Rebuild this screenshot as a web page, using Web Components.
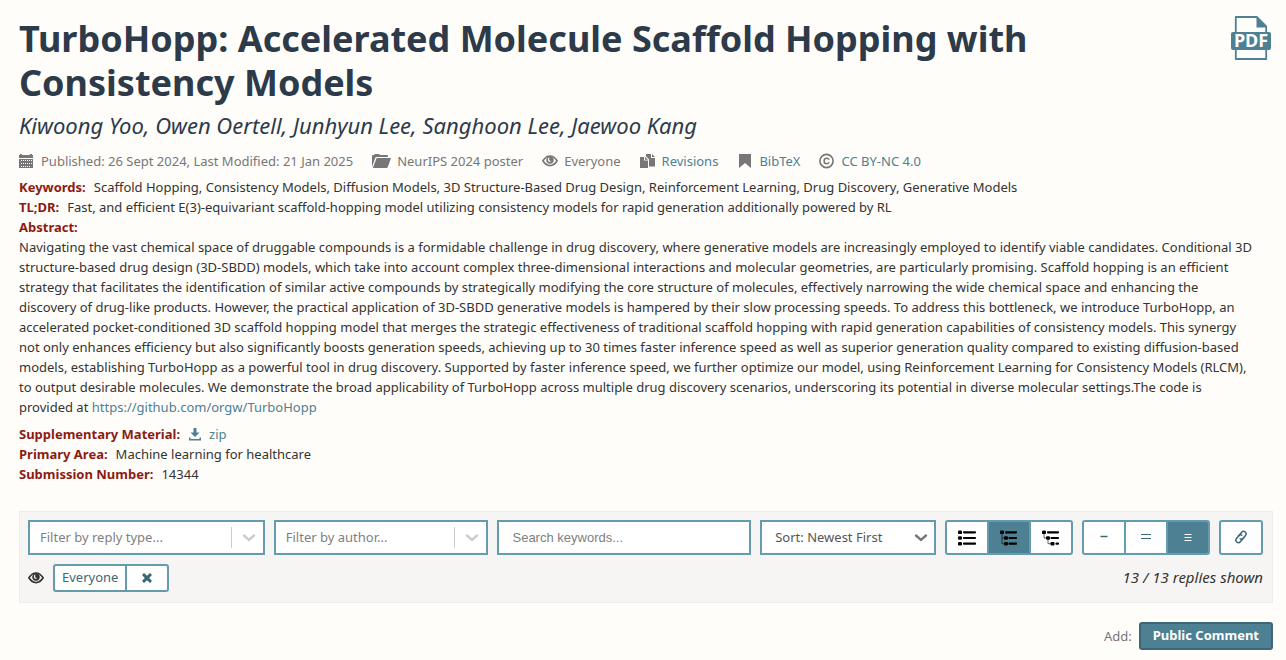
<!DOCTYPE html>
<html lang="en">
<head>
<meta charset="utf-8">
<meta name="viewport" content="width=device-width, initial-scale=1">
<title>TurboHopp: Accelerated Molecule Scaffold Hopping with Consistency Models</title>
<style>
  body {
    margin: 0;
    background: #fffdfa;
    color: #333;
    font: 13px/20px "Noto Sans", sans-serif;
    --teal: #4d8093;
    --teal-dark: #3e6775;
    --edge: #649bad;
    --muted: #777;
    --label: #8c1b13;
  }
</style>
</head>
<body>
<forum-page></forum-page>

<script>
const define = (name, html, setup) => {
  customElements.define(name, class extends HTMLElement {
    constructor() {
      super();
      const template = document.createElement('template');
      template.innerHTML = html;
      this.attachShadow({ mode: 'open' }).append(template.content.cloneNode(true));
    }
    connectedCallback() { if (setup) setup(this, this.shadowRoot); }
  });
};

const icons = {
  calendar: [16, 16, '<path fill-rule="evenodd" d="M0 2h1V1h2v1h8V1h2v1h1v3H0zM0 6h14v9H0zM2 7v1h1V7zm2 0v1h1V7zm2 0v1h1V7zm2 0v1h1V7zm2 0v1h1V7zm2 0v1h1V7zM2 10v1h1v-1zm2 0v1h1v-1zm2 0v1h1v-1zm2 0v1h1v-1zm2 0v1h1v-1zm2 0v1h1v-1zM2 13v1h1v-1zm2 0v1h1v-1zm2 0v1h1v-1zm2 0v1h1v-1zm2 0v1h1v-1z"/>'],
  folder: [19, 16, '<path d="M0 14V3q0-1 1-1h1l1-1h4l1 1h7q1 0 1 1v1H4.500Q3.600 4 3.200 5z"/><path d="M4.700 5H19L15.800 14q-.3 1-1.400 1H.8z"/>'],
  eye: [16, 16, '<path d="M.9 7.800Q4 3 8 3T15.100 7.800Q12 12.600 8 12.600T.9 7.800z" fill="none" stroke="currentColor" stroke-width="1.700"/><path fill-rule="evenodd" d="M8 3.200a3.800 3.800 0 1 0 .01 0zM6.100 5Q5.400 7.200 6.600 8.400 8 9.400 9.400 8.100 7.600 8.100 7.200 7 6.900 5.700 7.500 4.700z"/>'],
  duplicate: [16, 16, '<path d="M0 4h4v3.500h4V15H0z"/><path d="M5 3.800 8 6.700H5z"/><path d="M6 1h5v4h4v8.500H9V6.300L6 3.200z"/><path d="M12 1l3 3h-3z"/>'],
  bookmark: [16, 16, '<path d="M2 1h12v14l-6-5-6 5z"/>'],
  copyright: [16, 16, '<circle cx="7.500" cy="8" r="6.600" fill="none" stroke="currentColor" stroke-width="1.600"/><path d="M10.100 6.700Q9.400 5.200 7.700 5.200 5.100 5.200 5.100 8T7.700 10.800q1.700 0 2.400-1.500" fill="none" stroke="currentColor" stroke-width="1.500"/>'],
  download: [14, 14, '<path d="M5.500 1h3v4.500h3L7 10 2.500 5.500h3zM1 10.500h1.500V12h9v-1.500H13V13.500H1z"/>'],
  cross: [12, 12, '<path d="M1 3 3 1l3 2.800L9 1l2 2-2.800 3L11 9l-2 2-3-2.800L3 11 1 9l2.800-3z"/>'],
  list: [20, 18, '<rect x="1" y="1.500" width="4" height="3.600" rx="1.200"/><rect x="1" y="7.200" width="4" height="3.600" rx="1.200"/><rect x="1" y="12.900" width="4" height="3.600" rx="1.200"/><path d="M7 3.300h11M7 9h11M7 14.700h11" stroke="currentColor" stroke-width="2.200" stroke-linecap="round"/>'],
  nested: [20, 18, '<rect x="1" y="1.500" width="4" height="3.600" rx="1.200"/><rect x="5" y="7.200" width="4" height="3.600" rx="1.200"/><rect x="5" y="12.900" width="4" height="3.600" rx="1.200"/><path d="M7 3.300h10M10.500 9H17M10.500 14.700H17" stroke="currentColor" stroke-width="2.200" stroke-linecap="round"/><path d="M3 4v10.700h3M3 9h3" fill="none" stroke="currentColor" stroke-width=".6"/>'],
  tree: [20, 18, '<rect x="1" y="1.500" width="4" height="3.600" rx="1.200"/><rect x="5" y="7.200" width="4" height="3.600" rx="1.200"/><rect x="9.500" y="12.900" width="4" height="3.600" rx="1.200"/><path d="M7 3.300h10M10.500 9H17M15.500 14.700H17" stroke="currentColor" stroke-width="2.200" stroke-linecap="round"/><path d="M3 4v5h3M7 10v4.700h4" fill="none" stroke="currentColor" stroke-width=".6"/>'],
  minus: [12, 14, '<path d="M2.500 5.500h7" stroke="currentColor" stroke-width="1.400"/>'],
  equals: [12, 14, '<path d="M1 3.500h10M1 7.500h10" stroke="currentColor" stroke-width="1.200"/>'],
  bars: [12, 14, '<path d="M2.500 3.500h7M2.500 6.500h7M2.500 9.500h7" stroke="currentColor" stroke-width="1.200"/>'],
  link: [14, 16, '<g fill="none" stroke="currentColor" stroke-width="1.500" transform="rotate(-50 7 7)"><path d="M8.500 9.500H3A2.500 2.500 0 0 1 3 4.500H6.500A2.500 2.500 0 0 1 9 7"/><path d="M5.500 4.500H11A2.500 2.500 0 0 1 11 9.500H7.500A2.500 2.500 0 0 1 5 7"/></g>'],
  chevron: [14, 10, '<path d="M2 2.500l5 4.500 5-4.500" fill="none" stroke="currentColor" stroke-width="2.400" stroke-linecap="round"/>']
};

define('ui-icon', `
  <style>:host{display:inline-flex;flex:none} svg{display:block;fill:currentColor}</style>
  <svg aria-hidden="true"></svg>`, (host, root) => {
  const [w, h, body] = icons[host.getAttribute('name')];
  const svg = root.querySelector('svg');
  svg.setAttribute('viewBox', `0 0 ${w} ${h}`);
  svg.setAttribute('width', w);
  svg.setAttribute('height', h);
  svg.innerHTML = body;
});

define('pdf-link', `
  <style>
    :host{display:block;flex:none}
    a{display:block}
    svg{display:block}
    text{font:bold 18px "Noto Sans",sans-serif;fill:#fff}
  </style>
  <a href="#pdf" title="Download PDF"><svg width="40" height="46" viewBox="0 0 40 46">
    <path d="M4.800 1h21L35.200 10.500V43H4.800z" fill="#fffdfa" stroke="#4d8093" stroke-width="1.800" stroke-linejoin="round"/>
    <path d="M25.500 1v10.500h9.700z" fill="#4d8093"/>
    <rect y="16" width="40" height="18" rx="2" fill="#4d8093"/>
    <text x="20" y="31" text-anchor="middle">PDF</text>
  </svg></a>`);

define('note-header', `
  <style>
    :host{display:block;color:#2c3a4a}
    .top{display:flex;align-items:flex-start;justify-content:space-between;gap:24px;padding-right:2px}
    h1{margin:1px 0 0;max-width:1100px;font:bold 36px/44px "Noto Sans",sans-serif}
    .authors{font:italic 22px/32px "Noto Sans",sans-serif;margin-top:4px}
  </style>
  <div class="top"><h1><slot name="title"></slot></h1><pdf-link></pdf-link></div>
  <div class="authors"><slot name="authors"></slot></div>`);

define('meta-item', `
  <style>
    :host{display:flex;align-items:center;gap:6px;color:var(--muted)}
    ::slotted(a){color:var(--teal);text-decoration:none}
  </style>
  <span><slot></slot></span>`, (host, root) => {
  const icon = document.createElement('ui-icon');
  icon.setAttribute('name', host.getAttribute('icon'));
  root.querySelector('span').before(icon);
});

define('note-field', `
  <style>
    :host{display:block}
    strong{color:var(--label);margin-right:8px}
    :host([block]) strong{display:block}
    :host([block]) div{padding-right:18px}
    :host(:not([block])) div{display:inline}
  </style>
  <strong></strong><div><slot></slot></div>`, (host, root) => {
  root.querySelector('strong').textContent = host.getAttribute('label') + ':';
});

define('filter-select', `
  <style>
    :host{display:block;position:relative;min-width:0}
    select{appearance:none;box-sizing:border-box;width:100%;height:35px;margin:0;padding:0 40px 1px 10px;border:2px solid var(--edge);border-radius:0;background:#fff;color:#808080;font:inherit}
    .arrow{position:absolute;inset:7px 9px 7px auto;display:flex;align-items:center;padding-left:10px;border-left:1px solid #ccc;color:#ccc;pointer-events:none}
    :host([plain]) select{color:#555;padding-left:13px;padding-right:24px}
    :host([plain]) .arrow{color:#777;border:0;right:8px}
  </style>
  <select><option></option></select>
  <span class="arrow"><ui-icon name="chevron"></ui-icon></span>`, (host, root) => {
  const select = root.querySelector('select');
  select.setAttribute('aria-label', host.getAttribute('label'));
  root.querySelector('option').textContent = host.getAttribute('value');
});

define('keyword-search', `
  <style>
    :host{display:block;min-width:0}
    input{box-sizing:border-box;width:100%;height:35px;padding:0 13px;border:2px solid var(--edge);border-radius:0;background:#fff;font:13px "Liberation Sans",sans-serif}
    input::placeholder{color:#808080;opacity:1}
  </style>
  <input type="text" placeholder="Search keywords..." aria-label="Search keywords">`);

define('button-group', `
  <style>
    :host{display:flex;flex:none;box-sizing:border-box;height:35px;border:2px solid var(--edge);border-radius:3px;background:#fff;overflow:hidden;color:var(--teal-dark)}
    button{display:flex;align-items:center;justify-content:center;width:40px;padding:0;border:0;background:transparent;color:inherit}
    button + button{border-left:2px solid var(--edge);width:42px}
    button[aria-pressed=true]{background:var(--teal)}
    :host([tone=black]){color:#000}
    :host([tone=teal]) button[aria-pressed=true]{color:#fff}
  </style>`, (host, root) => {
  for (const entry of host.getAttribute('items').split(',')) {
    const [icon, label] = entry.split(':');
    const button = document.createElement('button');
    button.type = 'button';
    button.setAttribute('aria-label', label);
    button.setAttribute('aria-pressed', icon === host.getAttribute('selected'));
    button.innerHTML = `<ui-icon name="${icon}"></ui-icon>`;
    root.append(button);
  }
});

define('reader-tag', `
  <style>
    :host{display:flex;box-sizing:border-box;height:28px;border:2px solid var(--edge);border-radius:3px;background:#fff;overflow:hidden;color:var(--teal-dark)}
    button{display:flex;align-items:center;justify-content:center;padding:0 7px 2px;border:0;background:transparent;color:inherit;font:inherit}
    button + button{border-left:2px solid var(--edge);width:42px;padding:0}
  </style>
  <button type="button"><slot></slot></button>
  <button type="button" aria-label="Exclude"><ui-icon name="cross"></ui-icon></button>`);

define('filter-bar', `
  <style>
    :host{display:block;padding:8px 9px 10px 8px;border:1px solid #ececec;background:#f7f5f4}
    .row{display:flex;align-items:center;gap:9px}
    .row + .row{margin-top:9px}
    .w1{flex:237 1 0} .w2{flex:215 1 0} .w3{flex:254 1 0} .w4{flex:176 1 0}
    em{margin-left:auto;padding-bottom:2px;font-size:15px}
  </style>
  <div class="row">
    <filter-select class="w1" label="Reply type" value="Filter by reply type..."></filter-select>
    <filter-select class="w2" label="Author" value="Filter by author..."></filter-select>
    <keyword-search class="w3"></keyword-search>
    <filter-select class="w4" plain label="Sort" value="Sort: Newest First"></filter-select>
    <button-group tone="black" selected="nested" items="list:Linear,nested:Threaded,tree:Nested"></button-group>
    <button-group tone="teal" selected="bars" items="minus:Collapse,equals:Partial,bars:Expand"></button-group>
    <button-group items="link:Copy link"></button-group>
  </div>
  <div class="row">
    <ui-icon name="eye"></ui-icon>
    <reader-tag>Everyone</reader-tag>
    <em>13 / 13 replies shown</em>
  </div>`);

define('comment-action', `
  <style>
    :host{display:flex;justify-content:flex-end;align-items:center;gap:7px;color:var(--muted)}
    button{box-sizing:border-box;height:28px;padding:0 12px 2px;border:2px solid var(--teal-dark);border-radius:3px;background:var(--teal);color:#fff;font:inherit;font-weight:bold}
  </style>
  <span>Add:</span><button type="button">Public Comment</button>`);

define('forum-page', `
  <style>
    :host{display:block;padding:16px 13px 10px 19px}
    a{color:var(--teal);text-decoration:none}
    .meta{display:flex;flex-wrap:wrap;gap:0 19px;margin:10px 0 6px}
    .more{margin:7px 0 27px}
    .zip ui-icon{vertical-align:-2px;margin-right:7px}
    comment-action{margin-top:19px}
  </style>
  <note-header>
    <span slot="title">TurboHopp: Accelerated Molecule Scaffold Hopping with Consistency Models</span>
    <span slot="authors">Kiwoong Yoo, Owen Oertell, Junhyun Lee, Sanghoon Lee, Jaewoo Kang</span>
  </note-header>
  <div class="meta">
    <meta-item icon="calendar">Published: 26 Sept 2024, Last Modified: 21 Jan 2025</meta-item>
    <meta-item icon="folder">NeurIPS 2024 poster</meta-item>
    <meta-item icon="eye">Everyone</meta-item>
    <meta-item icon="duplicate"><a href="#revisions">Revisions</a></meta-item>
    <meta-item icon="bookmark"><a href="#bibtex">BibTeX</a></meta-item>
    <meta-item icon="copyright"><a href="#license">CC BY-NC 4.0</a></meta-item>
  </div>
  <note-field label="Keywords">Scaffold Hopping, Consistency Models, Diffusion Models, 3D Structure-Based Drug Design, Reinforcement Learning, Drug Discovery, Generative Models</note-field>
  <note-field label="TL;DR">Fast, and efficient E(3)-equivariant scaffold-hopping model utilizing consistency models for rapid generation additionally powered by RL</note-field>
  <note-field block label="Abstract">Navigating the vast chemical space of druggable compounds is a formidable challenge in drug discovery, where generative models are increasingly employed to identify viable candidates. Conditional 3D structure-based drug design (3D-SBDD) models, which take into account complex three-dimensional interactions and molecular geometries, are particularly promising. Scaffold hopping is an efficient strategy that facilitates the identification of similar active compounds by strategically modifying the core structure of molecules, effectively narrowing the wide chemical space and enhancing the discovery of drug-like products. However, the practical application of 3D-SBDD generative models is hampered by their slow processing speeds. To address this bottleneck, we introduce TurboHopp, an accelerated pocket-conditioned 3D scaffold hopping model that merges the strategic effectiveness of traditional scaffold hopping with rapid generation capabilities of consistency models. This synergy not only enhances efficiency but also significantly boosts generation speeds, achieving up to 30 times faster inference speed as well as superior generation quality compared to existing diffusion-based models, establishing TurboHopp as a powerful tool in drug discovery. Supported by faster inference speed, we further optimize our model, using Reinforcement Learning for Consistency Models (RLCM), to output desirable molecules. We demonstrate the broad applicability of TurboHopp across multiple drug discovery scenarios, underscoring its potential in diverse molecular settings.The code is provided at <a href="https://github.com/orgw/TurboHopp">https://github.com/orgw/TurboHopp</a></note-field>
  <div class="more">
    <note-field label="Supplementary Material"><a class="zip" href="#zip"><ui-icon name="download"></ui-icon>zip</a></note-field>
    <note-field label="Primary Area">Machine learning for healthcare</note-field>
    <note-field label="Submission Number">14344</note-field>
  </div>
  <filter-bar></filter-bar>
  <comment-action></comment-action>`);
</script>
</body>
</html>
